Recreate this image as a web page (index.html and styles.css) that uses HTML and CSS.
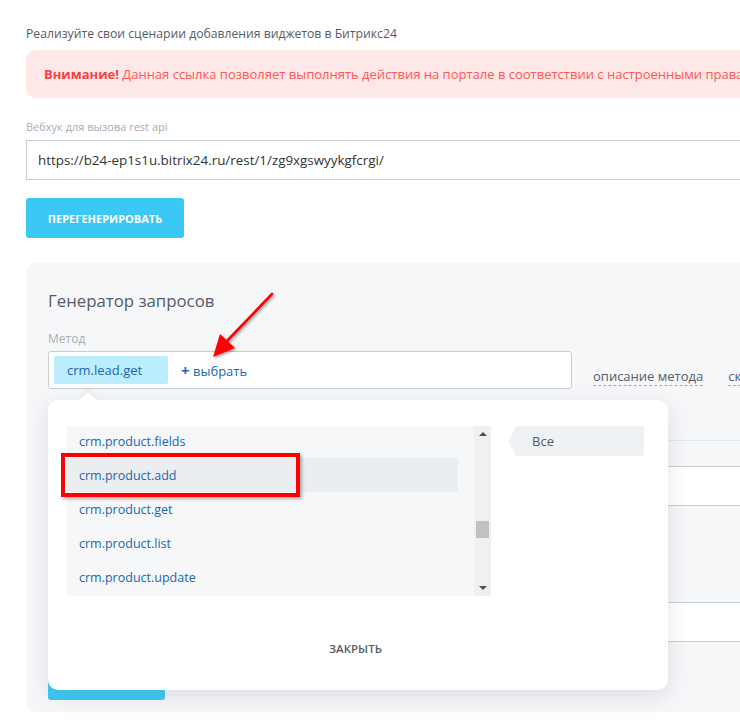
FILE: index.html
```html
<!DOCTYPE html>
<html lang="ru">
<head>
<meta charset="utf-8">
<title>Вебхук</title>
<link rel="stylesheet" href="styles.css">
</head>
<body>
<div class="page">
  <div class="intro">Реализуйте свои сценарии добавления виджетов в Битрикс24</div>
  <div class="alert"><b>Внимание!</b> Данная ссылка позволяет выполнять действия на портале в соответствии с настроенными правами доступа</div>
  <div class="label">Вебхук для вызова rest api</div>
  <div class="input">https://b24-ep1s1u.bitrix24.ru/rest/1/zg9xgswyykgfcrgi/</div>
  <div class="btn btn-main">ПЕРЕГЕНЕРИРОВАТЬ</div>

  <div class="panel">
    <div class="panel-title">Генератор запросов</div>
    <div class="label label-method">Метод</div>
    <div class="method-row">
      <div class="method-input">
        <span class="tag">crm.lead.get</span>
        <span class="add"><span class="plus">+</span> выбрать</span>
      </div>
      <span class="dlink">описание метода</span>
      <span class="dlink">скопировать</span>
    </div>
    <div class="sep"></div>
    <div class="field field-1"></div>
    <div class="field field-2"></div>
    <div class="btn btn-run">ВЫПОЛНИТЬ</div>
  </div>
</div>

<div class="popup">
  <div class="popup-body">
    <div class="list">
      <div class="items">
        <div class="item">crm.product.fields</div>
        <div class="item item-hover">crm.product.add</div>
        <div class="item">crm.product.get</div>
        <div class="item">crm.product.list</div>
        <div class="item">crm.product.update</div>
      </div>
      <div class="scrollbar">
        <span class="sb-up"></span>
        <span class="sb-thumb"></span>
        <span class="sb-down"></span>
      </div>
    </div>
    <div class="cats">
      <div class="cat">Все</div>
    </div>
  </div>
  <div class="popup-foot">ЗАКРЫТЬ</div>
</div>

<div class="mark-box"></div>
<svg class="mark-arrow" width="80" height="90" viewBox="0 0 80 90">
  <defs>
    <filter id="sh" x="-30%" y="-30%" width="160%" height="160%">
      <feDropShadow dx="1.5" dy="1.5" stdDeviation="1.2" flood-color="#000" flood-opacity="0.35"/>
    </filter>
  </defs>
  <g filter="url(#sh)">
    <line x1="72" y1="4" x2="26" y2="52" stroke="#f00" stroke-width="2.6" stroke-linecap="round"/>
    <polygon points="13,67 20,44 35,58" fill="#f00"/>
  </g>
</svg>
</body>
</html>
```
FILE: styles.css
```css
html, body {
  margin: 0;
  padding: 0;
  background: #fff;
  overflow: hidden;
  width: 740px;
  height: 726px;
  font-family: "Open Sans", "Noto Sans", sans-serif;
  color: #535c69;
}

.page {
  width: 1000px;
  padding: 24px 0 0 26px;
  box-sizing: border-box;
}

.intro {
  font-size: 12.2px;
  line-height: 20px;
  color: #535c69;
}

.alert {
  margin-top: 6px;
  height: 48px;
  line-height: 48px;
  padding: 0 18px;
  border-radius: 10px;
  background: #ffe8e8;
  color: #ff5752;
  font-size: 13px;
  white-space: nowrap;
  overflow: hidden;
}
.alert b { font-weight: 700; color: #f4433e; }

.label {
  margin-top: 21px;
  font-size: 11px;
  line-height: 16px;
  color: #a8adb4;
}

.input {
  margin-top: 5px;
  height: 40px;
  box-sizing: border-box;
  border: 1px solid #c6cdd3;
  border-right: none;
  background: #fff;
  padding: 0 11px;
  line-height: 38px;
  font-size: 13.4px;
  color: #333;
}

.btn {
  display: flex;
  align-items: center;
  justify-content: center;
  height: 40px;
  border-radius: 3px;
  background: #3bc8f5;
  color: #fff;
  font-weight: 700;
  font-size: 11px;
}
.btn-main {
  margin-top: 18px;
  width: 158px;
}

.panel {
  margin-top: 25px;
  background: #f6f7f9;
  border-radius: 10px 0 0 10px;
  padding: 26px 0 12px 22px;
  height: 449px;
  box-sizing: border-box;
}

.panel-title {
  font-size: 16.8px;
  line-height: 24px;
  color: #535c69;
}

.label-method {
  margin-top: 18px;
  font-size: 12px;
}

.method-row {
  margin-top: 4px;
  display: flex;
  align-items: flex-end;
  gap: 21px;
}

.method-input {
  width: 524px;
  height: 38px;
  box-sizing: border-box;
  background: #fff;
  border: 1px solid #c6cdd3;
  border-radius: 3px;
  display: flex;
  align-items: center;
  padding: 0 5px;
  gap: 13px;
}

.tag {
  width: 114px;
  height: 28px;
  box-sizing: border-box;
  padding-left: 13px;
  background: #bcedfc;
  border-radius: 2px;
  line-height: 28px;
  font-size: 13px;
  color: #2067b0;
}

.add {
  font-size: 13px;
  font-weight: 500;
  color: #2067b0;
}
.plus { font-weight: 700; font-size: 15px; }

.dlink {
  font-size: 13px;
  line-height: 18px;
  margin-bottom: 3px;
  border-bottom: 1px dashed #a8adb4;
  color: #535c69;
  white-space: nowrap;
}
.dlink + .dlink { margin-left: 4px; }

.sep {
  margin-top: 51px;
  border-top: 1px solid #e3e7eb;
}

.field {
  height: 40px;
  box-sizing: border-box;
  background: #fff;
  border-top: 1px solid #c6cdd3;
  border-bottom: 1px solid #c6cdd3;
}
.field-1 { margin-top: 25px; }
.field-2 { margin-top: 96px; }

.btn-run {
  margin-top: 18px;
  width: 117px;
}

/* popup */
.popup {
  position: absolute;
  left: 48px;
  top: 400px;
  width: 620px;
  height: 290px;
  box-sizing: border-box;
  background: #fff;
  border-radius: 10px;
  box-shadow: 0 6px 22px rgba(83, 92, 105, 0.16);
  padding: 26px 24px 0 19px;
}
.popup::before {
  content: "";
  position: absolute;
  left: 34px;
  top: -6px;
  width: 12px;
  height: 12px;
  background: #fff;
  transform: rotate(45deg);
  box-shadow: -2px -2px 4px rgba(83, 92, 105, 0.06);
}

.popup-body {
  display: flex;
  gap: 17px;
}

.list {
  width: 424px;
  height: 170px;
  background: #f5f7f9;
  display: flex;
  overflow: hidden;
}

.items {
  flex: 1;
  margin-top: -2px;
  padding-right: 16px;
}

.item {
  height: 34px;
  line-height: 36px;
  padding-left: 12px;
  font-size: 12.5px;
  font-weight: 500;
  color: #2067b0;
}
.item-hover { background: #ebeef1; }

.scrollbar {
  position: relative;
  width: 17px;
  background: #f0f0f0;
}
.sb-up, .sb-down {
  position: absolute;
  left: 5px;
  width: 0;
  height: 0;
  border-left: 4px solid transparent;
  border-right: 4px solid transparent;
}
.sb-up { top: 6px; border-bottom: 4px solid #505050; }
.sb-down { bottom: 6px; border-top: 4px solid #505050; }
.sb-thumb {
  position: absolute;
  left: 2px;
  top: 95px;
  width: 13px;
  height: 17px;
  background: #c1c1c1;
}

.cats {
  width: 136px;
}
.cat {
  position: relative;
  margin-left: 8px;
  height: 30px;
  line-height: 30px;
  padding-left: 16px;
  background: #eef2f4;
  border-radius: 0 3px 3px 0;
  font-size: 13px;
  color: #535c69;
}
.cat::before {
  content: "";
  position: absolute;
  left: -8px;
  top: 0;
  border-top: 15px solid transparent;
  border-bottom: 15px solid transparent;
  border-right: 8px solid #eef2f4;
}

.popup-foot {
  margin-top: 44px;
  text-align: center;
  font-size: 11.5px;
  font-weight: 600;
  color: #535c69;
  line-height: 18px;
}

/* annotations */
.mark-box {
  position: absolute;
  left: 61px;
  top: 453px;
  width: 239px;
  height: 44px;
  box-sizing: border-box;
  border: 4px solid #f00;
  box-shadow: 2px 2px 3px rgba(0, 0, 0, 0.3);
}

.mark-arrow {
  position: absolute;
  left: 200px;
  top: 290px;
  overflow: visible;
}
```
